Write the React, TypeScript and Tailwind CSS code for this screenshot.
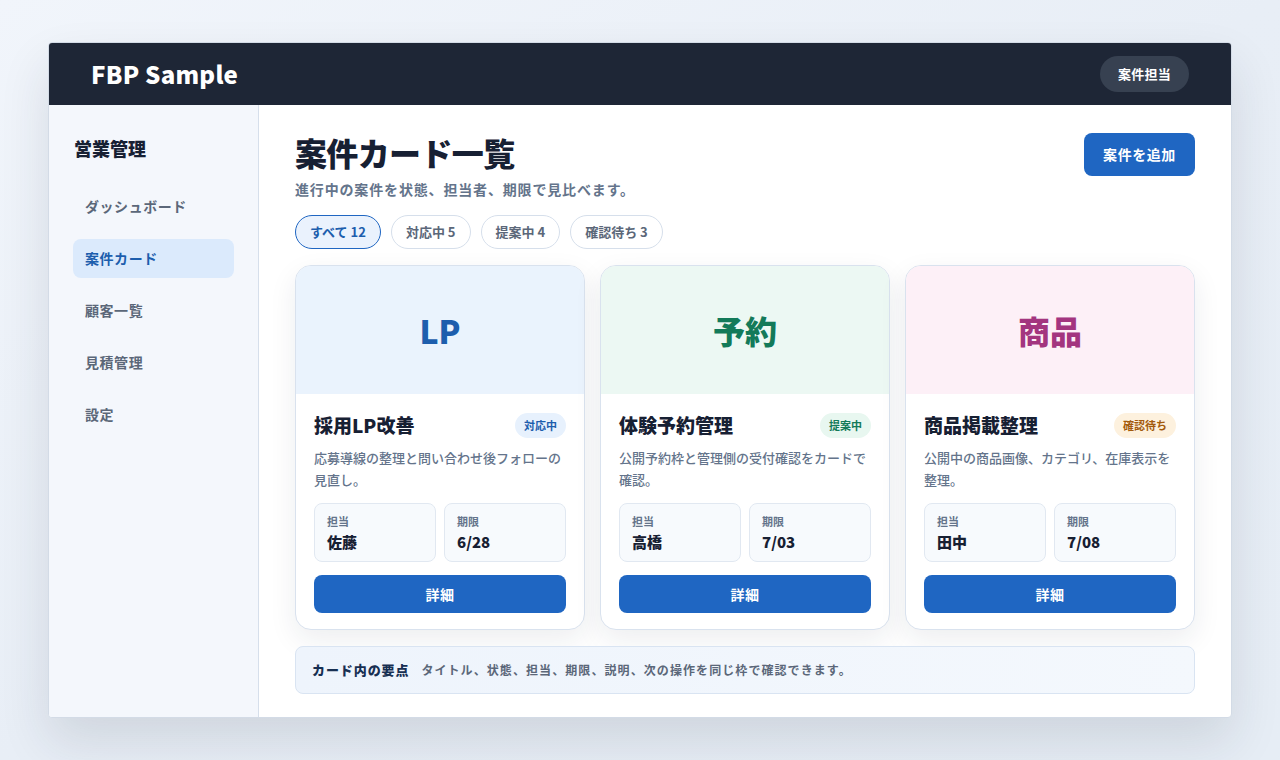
import React from "react"

const font = { fontFamily: '"Noto Sans CJK JP", "Noto Sans", sans-serif' }

type Project = {
  label: string
  title: string
  status: string
  desc: string
  owner: string
  due: string
  heroBg: string
  heroText: string
  badge: string
}

const projects: Project[] = [
  {
    label: "LP",
    title: "採用LP改善",
    status: "対応中",
    desc: "応募導線の整理と問い合わせ後フォローの見直し。",
    owner: "佐藤",
    due: "6/28",
    heroBg: "bg-[#eaf3fd]",
    heroText: "text-[#1d5ead]",
    badge: "bg-[#e7f1fd] text-[#1d5ead]",
  },
  {
    label: "予約",
    title: "体験予約管理",
    status: "提案中",
    desc: "公開予約枠と管理側の受付確認をカードで確認。",
    owner: "高橋",
    due: "7/03",
    heroBg: "bg-[#ecf8f3]",
    heroText: "text-[#137a59]",
    badge: "bg-[#e8f7f0] text-[#137a59]",
  },
  {
    label: "商品",
    title: "商品掲載整理",
    status: "確認待ち",
    desc: "公開中の商品画像、カテゴリ、在庫表示を整理。",
    owner: "田中",
    due: "7/08",
    heroBg: "bg-[#fdf0f7]",
    heroText: "text-[#a3357f]",
    badge: "bg-[#fdf1de] text-[#a35a0c]",
  },
]

const navItems = ["ダッシュボード", "案件カード", "顧客一覧", "見積管理", "設定"]
const filters = [
  { label: "すべて 12", active: true },
  { label: "対応中 5", active: false },
  { label: "提案中 4", active: false },
  { label: "確認待ち 3", active: false },
]

function ProjectCard({ p }: { p: Project }) {
  return (
    <div className="flex flex-col overflow-hidden rounded-2xl border border-[#d9e2ee] bg-white shadow-[0_10px_28px_rgba(30,41,59,0.08)]">
      <div className={`flex h-[128px] items-center justify-center ${p.heroBg}`}>
        <span className={`text-[32px] font-extrabold ${p.heroText}`}>{p.label}</span>
      </div>
      <div className="flex flex-col px-[18px] pt-[17px] pb-[16px]">
        <div className="flex items-center justify-between">
          <h3 className="text-[19px] font-extrabold text-[#172033]">{p.title}</h3>
          <span className={`rounded-full px-[9px] py-[4px] text-[11px] font-bold ${p.badge}`}>{p.status}</span>
        </div>
        <p className="mt-[7px] text-[13px] font-medium leading-[22px] text-[#64748b]">{p.desc}</p>
        <div className="mt-[12px] grid grid-cols-2 gap-[8px]">
          <div className="rounded-lg border border-[#e1e8f1] bg-[#f7fafd] px-[12px] pt-[9px] pb-[8px]">
            <div className="text-[11px] font-bold leading-4 text-[#64748b]">担当</div>
            <div className="mt-[2px] text-[15px] font-extrabold text-[#172033]">{p.owner}</div>
          </div>
          <div className="rounded-lg border border-[#e1e8f1] bg-[#f7fafd] px-[12px] pt-[9px] pb-[8px]">
            <div className="text-[11px] font-bold leading-4 text-[#64748b]">期限</div>
            <div className="mt-[2px] text-[15px] font-extrabold text-[#172033]">{p.due}</div>
          </div>
        </div>
        <button className="mt-[13px] h-[38px] rounded-lg bg-[#1f66c2] text-[14px] font-bold tracking-[0.04em] text-white">
          詳細
        </button>
      </div>
    </div>
  )
}

export default function App() {
  return (
    <div
      className="flex h-[760px] w-[1280px] items-start justify-center bg-gradient-to-br from-[#f1f5fb] via-[#e8eef6] to-[#e6edf5] pt-[42px]"
      style={font}
    >
      <div className="flex h-[676px] w-[1184px] flex-col overflow-hidden rounded-[4px] border border-[#d3dbe6] bg-white shadow-[0_24px_50px_rgba(30,41,59,0.12)]">
        {/* header */}
        <header className="flex h-[62px] shrink-0 items-center justify-between bg-[#1e2636] pl-[42px] pr-[42px]">
          <span className="text-[24px] font-extrabold tracking-[0.01em] text-white">FBP Sample</span>
          <span className="rounded-full bg-[#374151] px-[18px] py-[8px] text-[13px] font-bold tracking-[0.02em] text-white">
            案件担当
          </span>
        </header>

        <div className="flex min-h-0 flex-1">
          {/* sidebar */}
          <aside className="w-[210px] shrink-0 border-r border-[#d6dfeb] bg-[#f4f7fc] px-[24px] pt-[30px]">
            <div className="pl-[1px] text-[18px] font-extrabold text-[#172033]">営業管理</div>
            <nav className="mt-[25px] flex flex-col gap-[13px]">
              {navItems.map((item) => (
                <div
                  key={item}
                  className={`flex h-[39px] items-center rounded-lg px-[12px] text-[14px] font-bold tracking-[0.04em] ${
                    item === "案件カード" ? "bg-[#dbeafc] text-[#1d5ead]" : "text-[#5b6779]"
                  }`}
                >
                  {item}
                </div>
              ))}
            </nav>
          </aside>

          {/* main */}
          <main className="flex flex-1 flex-col px-[36px] pt-[28px]">
            <div className="flex items-start justify-between">
              <div>
                <h1 className="text-[32px] font-extrabold leading-[38px] tracking-[-0.02em] text-[#172033]">案件カード一覧</h1>
                <p className="mt-[8px] text-[14px] font-bold leading-5 tracking-[0.06em] text-[#64748b]">
                  進行中の案件を状態、担当者、期限で見比べます。
                </p>
              </div>
              <button className="h-[43px] w-[111px] rounded-lg bg-[#1f66c2] text-[14px] font-bold tracking-[0.04em] text-white">
                案件を追加
              </button>
            </div>

            <div className="mt-[16px] flex gap-[10px]">
              {filters.map((f) => (
                <span
                  key={f.label}
                  className={`flex h-[34px] items-center rounded-full border px-[14px] text-[13px] font-bold ${
                    f.active ? "border-[#1f66c2] bg-[#eaf2fd] text-[#1d5ead]" : "border-[#d6dfeb] bg-white text-[#5b6779]"
                  }`}
                >
                  {f.label}
                </span>
              ))}
            </div>

            <div className="mt-[16px] grid grid-cols-3 gap-[15px]">
              {projects.map((p) => (
                <ProjectCard key={p.title} p={p} />
              ))}
            </div>

            <div className="mt-[16px] flex h-[48px] items-center gap-[12px] rounded-lg border border-[#d9e4f2] bg-gradient-to-r from-[#eef4fc] to-[#f4f8fd] px-[16px]">
              <span className="text-[13px] font-extrabold tracking-[0.07em] text-[#172f52]">カード内の要点</span>
              <span className="text-[12px] font-bold tracking-[0.09em] text-[#5b6779]">
                タイトル、状態、担当、期限、説明、次の操作を同じ枠で確認できます。
              </span>
            </div>
          </main>
        </div>
      </div>
    </div>
  )
}
